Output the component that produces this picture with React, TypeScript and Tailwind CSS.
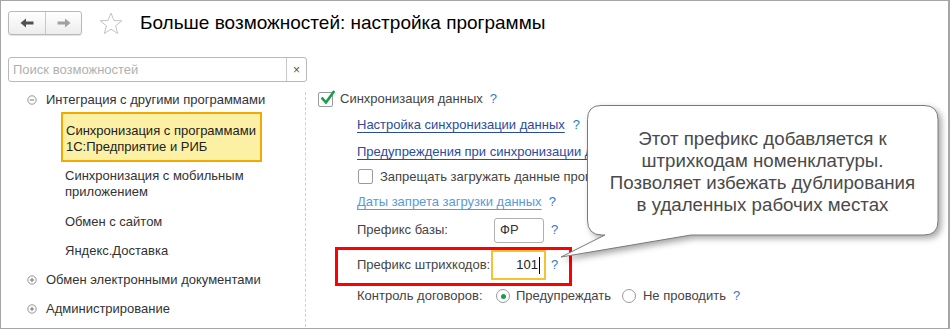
import React from "react";

const Q = ({ className = "" }: { className?: string }) => (
  <span className={"text-[#2a7cc6] text-[13px] " + className}>?</span>
);

const TreeIcon = ({ plus }: { plus?: boolean }) => (
  <svg width="10" height="10" viewBox="0 0 10 10" className="shrink-0">
    <circle cx="5" cy="5" r="4.2" fill="none" stroke="#8a8a8a" strokeWidth="0.9" />
    <line x1="2.8" y1="5" x2="7.2" y2="5" stroke="#6a6a6a" strokeWidth="0.9" />
    {plus && <line x1="5" y1="2.8" x2="5" y2="7.2" stroke="#6a6a6a" strokeWidth="0.9" />}
  </svg>
);

const Checkbox = ({ checked }: { checked?: boolean }) => (
  <div className="relative w-[15px] h-[15px] shrink-0 border border-[#9a9a9a] rounded-[2px] bg-white">
    {checked && (
      <svg width="16" height="16" viewBox="0 0 16 16" className="absolute left-[1px] top-[-3px]">
        <path d="M2.5 8.5 L6 12.5 L13.5 2" fill="none" stroke="#17a045" strokeWidth="2.6" strokeLinecap="square" />
      </svg>
    )}
  </div>
);

const Radio = ({ checked }: { checked?: boolean }) => (
  <div className="w-[14px] h-[14px] shrink-0 rounded-full border border-[#9a9a9a] bg-white flex items-center justify-center">
    {checked && <div className="w-[5px] h-[5px] rounded-full bg-[#1f9a4a]" />}
  </div>
);

export default function App() {
  return (
    <div className="relative w-[950px] h-[329px] overflow-hidden bg-white border-t border-l border-b border-r-2 border-[#a6a6a6] font-['Liberation_Sans',Arial,sans-serif] text-[13px] text-[#333]">
      {/* Header */}
      <div className="flex items-center pt-[10px] pl-[7px] h-[34px]">
        <div className="flex w-[74px] h-[24px] rounded-[3px] border border-[#b8b8b8] bg-gradient-to-b from-white to-[#ededed] shadow-[0_1px_1px_rgba(0,0,0,0.12)]">
          <div className="w-[37px] h-full flex items-center justify-center border-r border-[#c8c8c8]">
            <svg width="14" height="10" viewBox="0 0 14 10">
              <path d="M0.5 5 L6 0.5 V3.4 H13.5 V6.6 H6 V9.5 Z" fill="#505050" />
            </svg>
          </div>
          <div className="flex-1 h-full flex items-center justify-center">
            <svg width="14" height="10" viewBox="0 0 14 10">
              <path d="M13.5 5 L8 0.5 V3.4 H0.5 V6.6 H8 V9.5 Z" fill="#a0a0a0" />
            </svg>
          </div>
        </div>
        <svg width="24" height="23" viewBox="0 0 24 23" className="ml-[17px]">
          <path
            d="M12 1 L14.9 8.4 L22.8 8.8 L16.6 13.8 L18.7 21.5 L12 17.2 L5.3 21.5 L7.4 13.8 L1.2 8.8 L9.1 8.4 Z"
            fill="none"
            stroke="#c4c4c4"
            strokeWidth="1"
            strokeLinejoin="round"
          />
        </svg>
        <div className="ml-[17px] text-[19px] text-black leading-[22px]">
          Больше возможностей: настройка программы
        </div>
      </div>

      {/* Search */}
      <div className="mt-[22px] ml-[7px] flex w-[299px] h-[25px] rounded-[3px] border border-[#b8b8b8] bg-white">
        <div className="flex-1 flex items-center pl-[4px] text-[#b0b0b0] text-[13px]">Поиск возможностей</div>
        <div className="w-[20px] border-l border-[#c8c8c8] flex items-center justify-center text-[#555] text-[12px]">×</div>
      </div>

      {/* Body */}
      <div className="flex mt-[5px] h-[240px]">
        {/* Left tree */}
        <div className="w-[305px] shrink-0 border-r border-dashed border-[#cfcfcf] mt-[5px] pt-0">
          <div className="-mt-[5px] flex items-center h-[25px] pl-[26px]">
            <TreeIcon />
            <span className="ml-[9px]">Интеграция с другими программами</span>
          </div>
          <div className="ml-[60px] w-[201px] h-[50px] border-2 border-[#f2a900] bg-[#fbf0a4] pl-[3px] pt-[9px] leading-[16px] text-[#222]">
            Синхронизация с программами
            <br />
            1С:Предприятие и РИБ
          </div>
          <div className="mt-[6px] pl-[64px] leading-[16px]">
            Синхронизация с мобильным
            <br />
            приложением
          </div>
          <div className="mt-[7px] h-[29px] flex items-center pl-[64px]">Обмен с сайтом</div>
          <div className="h-[29px] flex items-center pl-[64px]">Яндекс.Доставка</div>
          <div className="h-[29px] flex items-center pl-[26px]">
            <TreeIcon plus />
            <span className="ml-[9px]">Обмен электронными документами</span>
          </div>
          <div className="h-[29px] flex items-center pl-[26px]">
            <TreeIcon plus />
            <span className="ml-[9px]">Администрирование</span>
          </div>
        </div>

        {/* Right settings */}
        <div className="flex-1 text-[#444] whitespace-nowrap">
          <div className="h-[24px] flex items-center pl-[12px]">
            <Checkbox checked />
            <span className="ml-[7px]">Синхронизация данных</span>
            <Q className="ml-[7px]" />
          </div>
          <div className="h-[28px] flex items-center pl-[51px]">
            <span className="text-[#2c4b9b] underline underline-offset-[3px]">Настройка синхронизации данных</span>
            <Q className="ml-[8px]" />
          </div>
          <div className="h-[25px] flex items-center pl-[51px]">
            <span className="text-[#2c4b9b] underline underline-offset-[3px]">Предупреждения при синхронизации данных</span>
          </div>
          <div className="h-[25px] flex items-center pl-[52px]">
            <Checkbox />
            <span className="ml-[7px]">Запрещать загружать данные программы</span>
          </div>
          <div className="h-[26px] flex items-center pl-[51px]">
            <span className="text-[#5a9ad8] underline underline-offset-[3px]">Даты запрета загрузки данных</span>
            <Q className="ml-[7px]" />
          </div>
          <div className="h-[30px] flex items-center pl-[51px]">
            <span className="w-[137px]">Префикс базы:</span>
            <div className="w-[50px] h-[25px] rounded-[3px] border border-[#b0b0b0] flex items-center pl-[5px] text-[#333]">ФР</div>
            <Q className="ml-[7px]" />
          </div>
          <div className="mt-[2px] ml-[29px] w-[237px] h-[39px] border-[3px] border-[#ff0000]">
            <div className="h-[30px] flex items-center pl-[19px]">
              <span className="w-[134px]">Префикс штрихкодов:</span>
              <div className="w-[55px] h-[30px] border-2 border-[#f4c430] flex items-center justify-end pr-[4px] text-[#222]">
                101<span className="inline-block w-[1px] h-[17px] bg-black ml-[1px]" />
              </div>
              <Q className="ml-[5px]" />
            </div>
          </div>
          <div className="h-[20px] flex items-center pl-[51px]">
            <span className="w-[139px]">Контроль договоров:</span>
            <Radio checked />
            <span className="ml-[6px]">Предупреждать</span>
            <span className="ml-[11px]"><Radio /></span>
            <span className="ml-[7px]">Не проводить</span>
            <Q className="ml-[7px]" />
          </div>
        </div>
      </div>

      {/* Callout */}
      <div className="absolute left-[549px] top-[94px] w-[400px] h-[175px] pointer-events-none">
        <svg width="400" height="175" viewBox="0 0 400 175" className="absolute left-0 top-0 [filter:drop-shadow(3px_3px_3px_rgba(0,0,0,0.35))]">
          <path
            d="M51 10.5 H374 Q388 10.5 388 24.5 V126 Q388 140 374 140 H141 L11 162 L55 140 H52 Q37.5 140 37.5 125 V24.5 Q37.5 10.5 51 10.5 Z"
            fill="#ffffff"
            stroke="#7a7a7a"
            strokeWidth="1"
          />
        </svg>
        <div className="absolute left-[37px] top-[33px] w-[351px] text-center text-[18.7px] leading-[22px] text-[#4a4a4a]">
          Этот префикс добавляется к
          <br />
          штрихкодам номенклатуры.
          <br />
          Позволяет избежать дублирования
          <br />в удаленных рабочих местах
        </div>
      </div>
    </div>
  );
}
